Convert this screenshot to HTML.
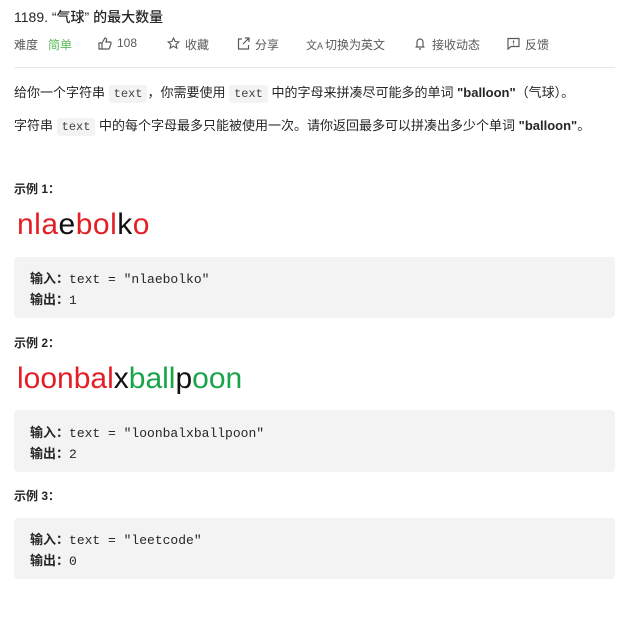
<!DOCTYPE html><html><head><meta charset="utf-8"><style>
body{margin:0;background:#fff;font-family:"Liberation Sans","Noto Sans CJK SC",sans-serif;color:#262626;width:635px;height:627px;overflow:hidden}
.a{position:absolute;white-space:nowrap}
.t{left:14px;top:7px;font-size:14px;font-weight:500}
.m{top:36px;font-size:12px;color:#595959}
.ic{position:absolute;top:37px}
.hr{left:14px;width:601px;top:67px;height:1px;background:#e8e8e8}
.p{left:14px;font-size:13px;color:#262626}
code{font-family:"Liberation Mono",monospace;font-size:12px;background:#f3f3f3;border-radius:3px;padding:2px 5px;color:#444}
.h{left:14px;font-size:12px;font-weight:bold}
.img{left:17px;font-size:30px;letter-spacing:0.5px}
.r{color:#e41e25}.k{color:#111}.g{color:#1aa44a}
.pre{left:14px;width:601px;background:#f3f3f3;border-radius:4px}
.pre div{position:absolute;left:16px;font-family:"Liberation Mono","Noto Sans CJK SC",monospace;font-size:13px;color:#262626}
.pre b{font-family:"Liberation Sans","Noto Sans CJK SC",sans-serif}
</style></head><body>
<div class="a t">1189. “气球” 的最大数量</div>
<div class="a m" style="left:14px">难度</div>
<div class="a m" style="left:48px;color:#5cb85c">简单</div>
<svg class="ic" style="left:98px" width="14" height="13" viewBox="0 0 14 13" fill="none" stroke="#595959" stroke-width="1.2"><path d="M1 6h3v6H1zM4 6l3-5c1 0 2 1 1.5 2.5L8 5h4c.8 0 1.3.7 1 1.5l-1.5 4.5c-.2.6-.7 1-1.3 1H4"/></svg>
<div class="a m" style="left:117px">108</div>
<svg class="ic" style="left:167px" width="13" height="13" viewBox="0 0 13 13" fill="none" stroke="#595959" stroke-width="1.1"><path d="M6.5 1l1.6 3.5 3.8.4-2.9 2.5.9 3.8-3.4-2-3.4 2 .9-3.8L1.1 4.9l3.8-.4z"/></svg>
<div class="a m" style="left:185px">收藏</div>
<svg class="ic" style="left:237px" width="13" height="13" viewBox="0 0 13 13" fill="none" stroke="#595959" stroke-width="1.2"><path d="M5 2H1.5v10h10V8M8 1h4v4M12 1L6 7"/></svg>
<div class="a m" style="left:255px">分享</div>
<div class="a m" style="left:306px;font-size:11px;top:37px">文<span style="font-size:9px">A</span></div>
<div class="a m" style="left:325px">切换为英文</div>
<svg class="ic" style="left:414px" width="12" height="13" viewBox="0 0 12 13" fill="none" stroke="#595959" stroke-width="1.2"><path d="M3 10V5a3 3 0 016 0v5M1.5 10h9M5 12h2"/></svg>
<div class="a m" style="left:432px">接收动态</div>
<svg class="ic" style="left:507px" width="13" height="13" viewBox="0 0 13 13" fill="none" stroke="#595959" stroke-width="1.2"><path d="M1 1.5h11v8H4l-3 2.5zM6.5 3.5v3M6.5 7.5v.8"/></svg>
<div class="a m" style="left:525px">反馈</div>
<div class="a hr"></div>
<div class="a p" style="top:82px">给你一个字符串 <code>text</code>，你需要使用 <code>text</code> 中的字母来拼凑尽可能多的单词 <b>"balloon"</b>（气球）。</div>
<div class="a p" style="top:115px">字符串 <code>text</code> 中的每个字母最多只能被使用一次。请你返回最多可以拼凑出多少个单词 <b>"balloon"</b>。</div>
<div class="a h" style="top:180px">示例 1：</div>
<div class="a img" style="top:208px"><span class="r">nla</span><span class="k">e</span><span class="r">bol</span><span class="k">k</span><span class="r">o</span></div>
<div class="a pre" style="top:257px;height:61px"><div style="top:11px"><b>输入：</b>text = "nlaebolko"</div><div style="top:32px"><b>输出：</b>1</div></div>
<div class="a h" style="top:334px">示例 2：</div>
<div class="a img" style="top:362px;letter-spacing:0"><span class="r">loonbal</span><span class="k">x</span><span class="g">ball</span><span class="k">p</span><span class="g">oon</span></div>
<div class="a pre" style="top:410px;height:62px"><div style="top:12px"><b>输入：</b>text = "loonbalxballpoon"</div><div style="top:33px"><b>输出：</b>2</div></div>
<div class="a h" style="top:487px">示例 3：</div>
<div class="a pre" style="top:518px;height:61px"><div style="top:11px"><b>输入：</b>text = "leetcode"</div><div style="top:32px"><b>输出：</b>0</div></div>
</body></html>
